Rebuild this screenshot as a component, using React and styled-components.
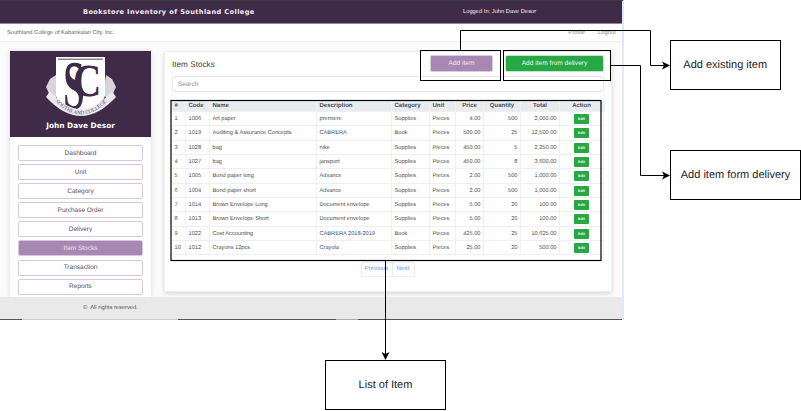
import React from 'react';
import styled, { createGlobalStyle } from 'styled-components';

const GlobalStyle = createGlobalStyle`
  html, body {
    margin: 0;
    padding: 0;
    background: #fff;
  }
  * {
    box-sizing: border-box;
  }
`;

const Stage = styled.div`
  position: relative;
  width: 801px;
  height: 411px;
  overflow: hidden;
  background: #fff;
  font-family: "Liberation Sans", sans-serif;
  text-rendering: geometricPrecision;
`;

const Frame = styled.div`
  display: flex;
  flex-direction: column;
  width: 624px;
  height: 320px;
  border-top: 1px solid #3a3a3a;
  border-right: 2px solid #dfe9f7;
  background: #fbfbfb;
`;

const TopBar = styled.header`
  display: flex;
  align-items: center;
  flex: 0 0 23px;
  border-bottom: 1px solid #8f8a93;
  background: #3f2b47;
  color: #f1eef2;
`;

const AppTitle = styled.div`
  margin-left: 83px;
  width: 380px;
  font-family: "DejaVu Sans", sans-serif;
  font-size: 6.6px;
  font-weight: 700;
  letter-spacing: 0.4px;
`;

const LoggedIn = styled.div`
  font-size: 5.75px;
`;

const SubBar = styled.div`
  display: flex;
  align-items: center;
  justify-content: space-between;
  flex: 0 0 17px;
  padding: 0 6px 0 7px;
  background: #fff;
  color: #666;
  font-size: 5.66px;
  box-shadow: 0 1px 2px rgba(0, 0, 0, 0.06);
`;

const SubLinks = styled.div`
  display: flex;
  gap: 13px;
  color: #8b8b8b;
  font-size: 5.9px;
`;

const Content = styled.div`
  display: flex;
  align-items: flex-start;
  gap: 13px;
  flex: 1;
  min-height: 0;
  padding: 10px 10px 0;
`;

const Sidebar = styled.aside`
  flex: 0 0 141px;
  height: 246px;
  background: #fff;
  box-shadow: 0 0 5px rgba(0, 0, 0, 0.14);
`;

const Profile = styled.div`
  display: flex;
  flex-direction: column;
  align-items: center;
  height: 86px;
  padding-top: 4px;
  background: #3f2b47;
`;

const ProfileName = styled.div`
  color: #fff;
  font-family: "DejaVu Sans", sans-serif;
  font-size: 7.4px;
  font-weight: 700;
  line-height: 10px;
`;

const Nav = styled.nav`
  display: flex;
  flex-direction: column;
  gap: 3.1px;
  padding: 8px 8px 0;
`;

const NavItem = styled.div`
  display: flex;
  align-items: center;
  justify-content: center;
  height: 16px;
  border: 1px solid #d7c7df;
  border-radius: 2px;
  background: ${(p) => (p.$active ? '#a688b2' : '#fff')};
  color: ${(p) => (p.$active ? '#ece4ef' : '#5a4a60')};
  font-size: 6.5px;
`;

const Card = styled.main`
  flex: 0 0 448px;
  height: 241px;
  padding: 3px 7px 0;
  border: 1px solid #eee;
  border-radius: 2px;
  background: #fff;
  box-shadow: 0 2px 4px rgba(0, 0, 0, 0.14);
`;

const CardHead = styled.div`
  display: flex;
  align-items: center;
  height: 17px;
`;

const CardTitle = styled.h2`
  flex: 1;
  margin: 0;
  padding-top: 1px;
  color: #444;
  font-size: 8.2px;
  font-weight: 400;
`;

const ActionButton = styled.div`
  display: flex;
  align-items: center;
  justify-content: center;
  width: ${(p) => p.$width}px;
  height: 17px;
  margin-left: ${(p) => p.$gap}px;
  border: 1px solid ${(p) => p.$border};
  border-radius: 2px;
  background: ${(p) => p.$bg};
  color: ${(p) => p.$color};
  font-size: 6.6px;
`;

const Search = styled.div`
  display: flex;
  align-items: center;
  height: 16px;
  margin-top: 4px;
  padding-left: 5px;
  border: 1px solid #e6e6e6;
  border-radius: 2px;
  color: #8d8d8d;
  font-size: 6.4px;
`;

const Table = styled.div`
  margin-top: 9px;
  margin-right: -1px;
`;

const Row = styled.div`
  display: grid;
  grid-template-columns: 14px 24px 107px 75px 38px 26px 28px 37px 39px 44px;
  height: ${(p) => (p.$head ? '11px' : '14.33px')};
  background: ${(p) => (p.$head ? '#e9ecef' : '#fff')};
  border-bottom: 1px solid #efefef;
`;

const Cell = styled.div`
  display: flex;
  align-items: center;
  justify-content: ${(p) => p.$justify || 'flex-start'};
  padding: ${(p) => (p.$head ? '0 2.5px' : '1px 2.5px 0')};
  border-right: 1px solid #f1f1f1;
  overflow: hidden;
  white-space: nowrap;
  color: ${(p) => (p.$head ? '#46505c' : '#4d4d4d')};
  font-size: ${(p) => (p.$head ? '6px' : '5.65px')};
  font-weight: ${(p) => (p.$head ? 700 : 400)};
`;

const EditButton = styled.div`
  display: flex;
  align-items: center;
  justify-content: center;
  width: 15px;
  height: 10px;
  border-radius: 1px;
  background: #28a745;
  color: #e8f7eb;
  font-size: 3.8px;
  font-weight: 700;
`;

const Pager = styled.div`
  display: flex;
  justify-content: center;
  margin-top: 6.5px;
`;

const PageLink = styled.div`
  display: flex;
  align-items: center;
  justify-content: center;
  width: ${(p) => p.$width}px;
  height: 15px;
  margin-left: -1px;
  border: 1px solid #e9ecef;
  color: #5c93f2;
  font-size: 6px;
`;

const Footer = styled.footer`
  display: flex;
  align-items: center;
  gap: 3px;
  flex: 0 0 22px;
  padding-left: 83px;
  background: #e9e9e9;
  color: #555;
  font-size: 5.75px;
`;

const FrameEdge = styled.div`
  flex: 0 0 1px;
  background: linear-gradient(
    90deg,
    #555 22px,
    #cfcfcf 22px,
    #cfcfcf 178px,
    #555 178px,
    #555 336px,
    #aaa 336px,
    #aaa 358px,
    #555 358px
  );
`;

/* annotations lying over the screenshot */
const Connectors = styled.svg`
  position: absolute;
  top: 0;
  left: 0;
  pointer-events: none;
`;

const NoteBox = styled.div`
  position: absolute;
  top: ${(p) => p.$top}px;
  left: ${(p) => p.$left}px;
  display: flex;
  align-items: center;
  justify-content: center;
  width: ${(p) => p.$width}px;
  height: 50px;
  border: 1px solid #000;
  background: #fff;
  color: #222;
  font-size: 11px;
  white-space: nowrap;
`;

const rows = [
  [1, 1006, 'Art paper', 'premiere', 'Supplies', 'Pieces', '4.00', 500, '2,000.00'],
  [2, 1019, 'Auditing & Assurance Concepts', 'CABRERA', 'Book', 'Pieces', '500.00', 25, '12,500.00'],
  [3, 1028, 'bag', 'nike', 'Supplies', 'Pieces', '450.00', 5, '2,250.00'],
  [4, 1027, 'bag', 'jansport', 'Supplies', 'Pieces', '450.00', 8, '3,600.00'],
  [5, 1005, 'Bond paper long', 'Advance', 'Supplies', 'Pieces', '2.00', 500, '1,000.00'],
  [6, 1004, 'Bond paper short', 'Advance', 'Supplies', 'Pieces', '2.00', 500, '1,000.00'],
  [7, 1014, 'Brown Envelope Long', 'Document envelope', 'Supplies', 'Pieces', '5.00', 20, '100.00'],
  [8, 1013, 'Brown Envelope Short', 'Document envelope', 'Supplies', 'Pieces', '5.00', 20, '100.00'],
  [9, 1022, 'Cost Accounting', 'CABRERA 2018-2019', 'Book', 'Pieces', '425.00', 25, '10,625.00'],
  [10, 1012, 'Crayons 12pcs', 'Crayola', 'Supplies', 'Pieces', '25.00', 20, '500.00'],
];

const navItems = ['Dashboard', 'Unit', 'Category', 'Purchase Order', 'Delivery', 'Item Stocks', 'Transaction', 'Reports'];

function Logo() {
  return (
    <svg width="72" height="66" viewBox="0 0 72 66">
      <defs>
        <path id="sealArc" d="M6 42 Q36 77 66 42" fill="none" />
      </defs>
      <path d="M1 32 L5 24 L11 20 L14 40 L7 45 Z" fill="#d8d5d9" />
      <path d="M71 32 L67 24 L61 20 L58 40 L65 45 Z" fill="#d8d5d9" />
      <path d="M11 2 H60 V40 Q58 52 36 60 Q13 52 11 40 Z" fill="#fff" />
      <rect x="13" y="3.5" width="45" height="1.5" fill="#8d8490" />
      <g fill="#3f2b47" fontFamily="'Liberation Serif', serif" fontWeight="700">
        <text transform="translate(42 41) scale(0.85 1)" textAnchor="middle" fontSize="46">C</text>
        <text transform="translate(29 54) scale(0.55 1)" textAnchor="middle" fontSize="70">S</text>
      </g>
      <path d="M1 42 Q36 80 71 42 L67 36 Q36 72 5 36 Z" fill="#ebe9ec" />
      <text fontFamily="'Liberation Serif', serif" fontSize="5.4" fill="#5a4a60">
        <textPath href="#sealArc" startOffset="50%" textAnchor="middle">SOUTHLAND COLLEGE</textPath>
      </text>
    </svg>
  );
}

function AnnotationLines() {
  return (
    <Connectors width="801" height="411" viewBox="0 0 801 411">
      <g fill="none" stroke="#000" strokeWidth="1">
        <rect x="420.5" y="50.5" width="80" height="30" />
        <rect x="503.5" y="50.5" width="107" height="30" />
        <rect x="171" y="100.5" width="430" height="160" strokeWidth="1.2" />
        <path d="M460.5 50 V30.5 H650.5 V65.5 H664" />
        <path d="M611 65.5 H640.5 V175.5 H664" />
        <path d="M385.5 261 V354" />
      </g>
      <path d="M670 65.5 L662 61.5 L664 65.5 L662 69.5 Z" fill="#000" />
      <path d="M670 175.5 L662 171.5 L664 175.5 L662 179.5 Z" fill="#000" />
      <path d="M385.5 360 L381.5 352 L385.5 354 L389.5 352 Z" fill="#000" />
    </Connectors>
  );
}

export default function App() {
  return (
    <>
      <GlobalStyle />
      <Stage>
        <Frame>
          <TopBar>
            <AppTitle>Bookstore Inventory of Southland College</AppTitle>
            <LoggedIn>Logged In: John Dave Desor</LoggedIn>
          </TopBar>
          <SubBar>
            <span>Southland College of Kabankalan City, Inc.</span>
            <SubLinks>
              <span>Profile</span>
              <span>Logout</span>
            </SubLinks>
          </SubBar>
          <Content>
            <Sidebar>
              <Profile>
                <Logo />
                <ProfileName>John Dave Desor</ProfileName>
              </Profile>
              <Nav>
                {navItems.map((item) => (
                  <NavItem key={item} $active={item === 'Item Stocks'}>
                    {item}
                  </NavItem>
                ))}
              </Nav>
            </Sidebar>
            <Card>
              <CardHead>
                <CardTitle>Item Stocks</CardTitle>
                <ActionButton $width={63} $gap={0} $bg="#a688b2" $border="#d9cde0" $color="#efe8f2">
                  Add item
                </ActionButton>
                <ActionButton $width={99} $gap={12} $bg="#28a745" $border="#bfe6c8" $color="#eaf8ed">
                  Add item from delivery
                </ActionButton>
              </CardHead>
              <Search>Search</Search>
              <Table>
                <Row $head>
                  <Cell $head>#</Cell>
                  <Cell $head>Code</Cell>
                  <Cell $head>Name</Cell>
                  <Cell $head>Description</Cell>
                  <Cell $head>Category</Cell>
                  <Cell $head>Unit</Cell>
                  <Cell $head $justify="center">Price</Cell>
                  <Cell $head $justify="center">Quantity</Cell>
                  <Cell $head $justify="center">Total</Cell>
                  <Cell $head $justify="center">Action</Cell>
                </Row>
                {rows.map((row) => (
                  <Row key={row[0]}>
                    <Cell>{row[0]}</Cell>
                    <Cell>{row[1]}</Cell>
                    <Cell>{row[2]}</Cell>
                    <Cell>{row[3]}</Cell>
                    <Cell>{row[4]}</Cell>
                    <Cell>{row[5]}</Cell>
                    <Cell $justify="flex-end">{row[6]}</Cell>
                    <Cell $justify="flex-end">{row[7]}</Cell>
                    <Cell $justify="flex-end">{row[8]}</Cell>
                    <Cell $justify="center">
                      <EditButton>Edit</EditButton>
                    </Cell>
                  </Row>
                ))}
              </Table>
              <Pager>
                <PageLink $width={32}>Previous</PageLink>
                <PageLink $width={23}>Next</PageLink>
              </Pager>
            </Card>
          </Content>
          <Footer>
            <span>©</span>
            <span>All rights reserved.</span>
          </Footer>
          <FrameEdge />
        </Frame>
        <AnnotationLines />
        <NoteBox $top={40} $left={670} $width={110.5}>Add existing item</NoteBox>
        <NoteBox $top={150} $left={670} $width={131}>Add item form delivery</NoteBox>
        <NoteBox $top={360} $left={325} $width={121}>List of Item</NoteBox>
      </Stage>
    </>
  );
}
